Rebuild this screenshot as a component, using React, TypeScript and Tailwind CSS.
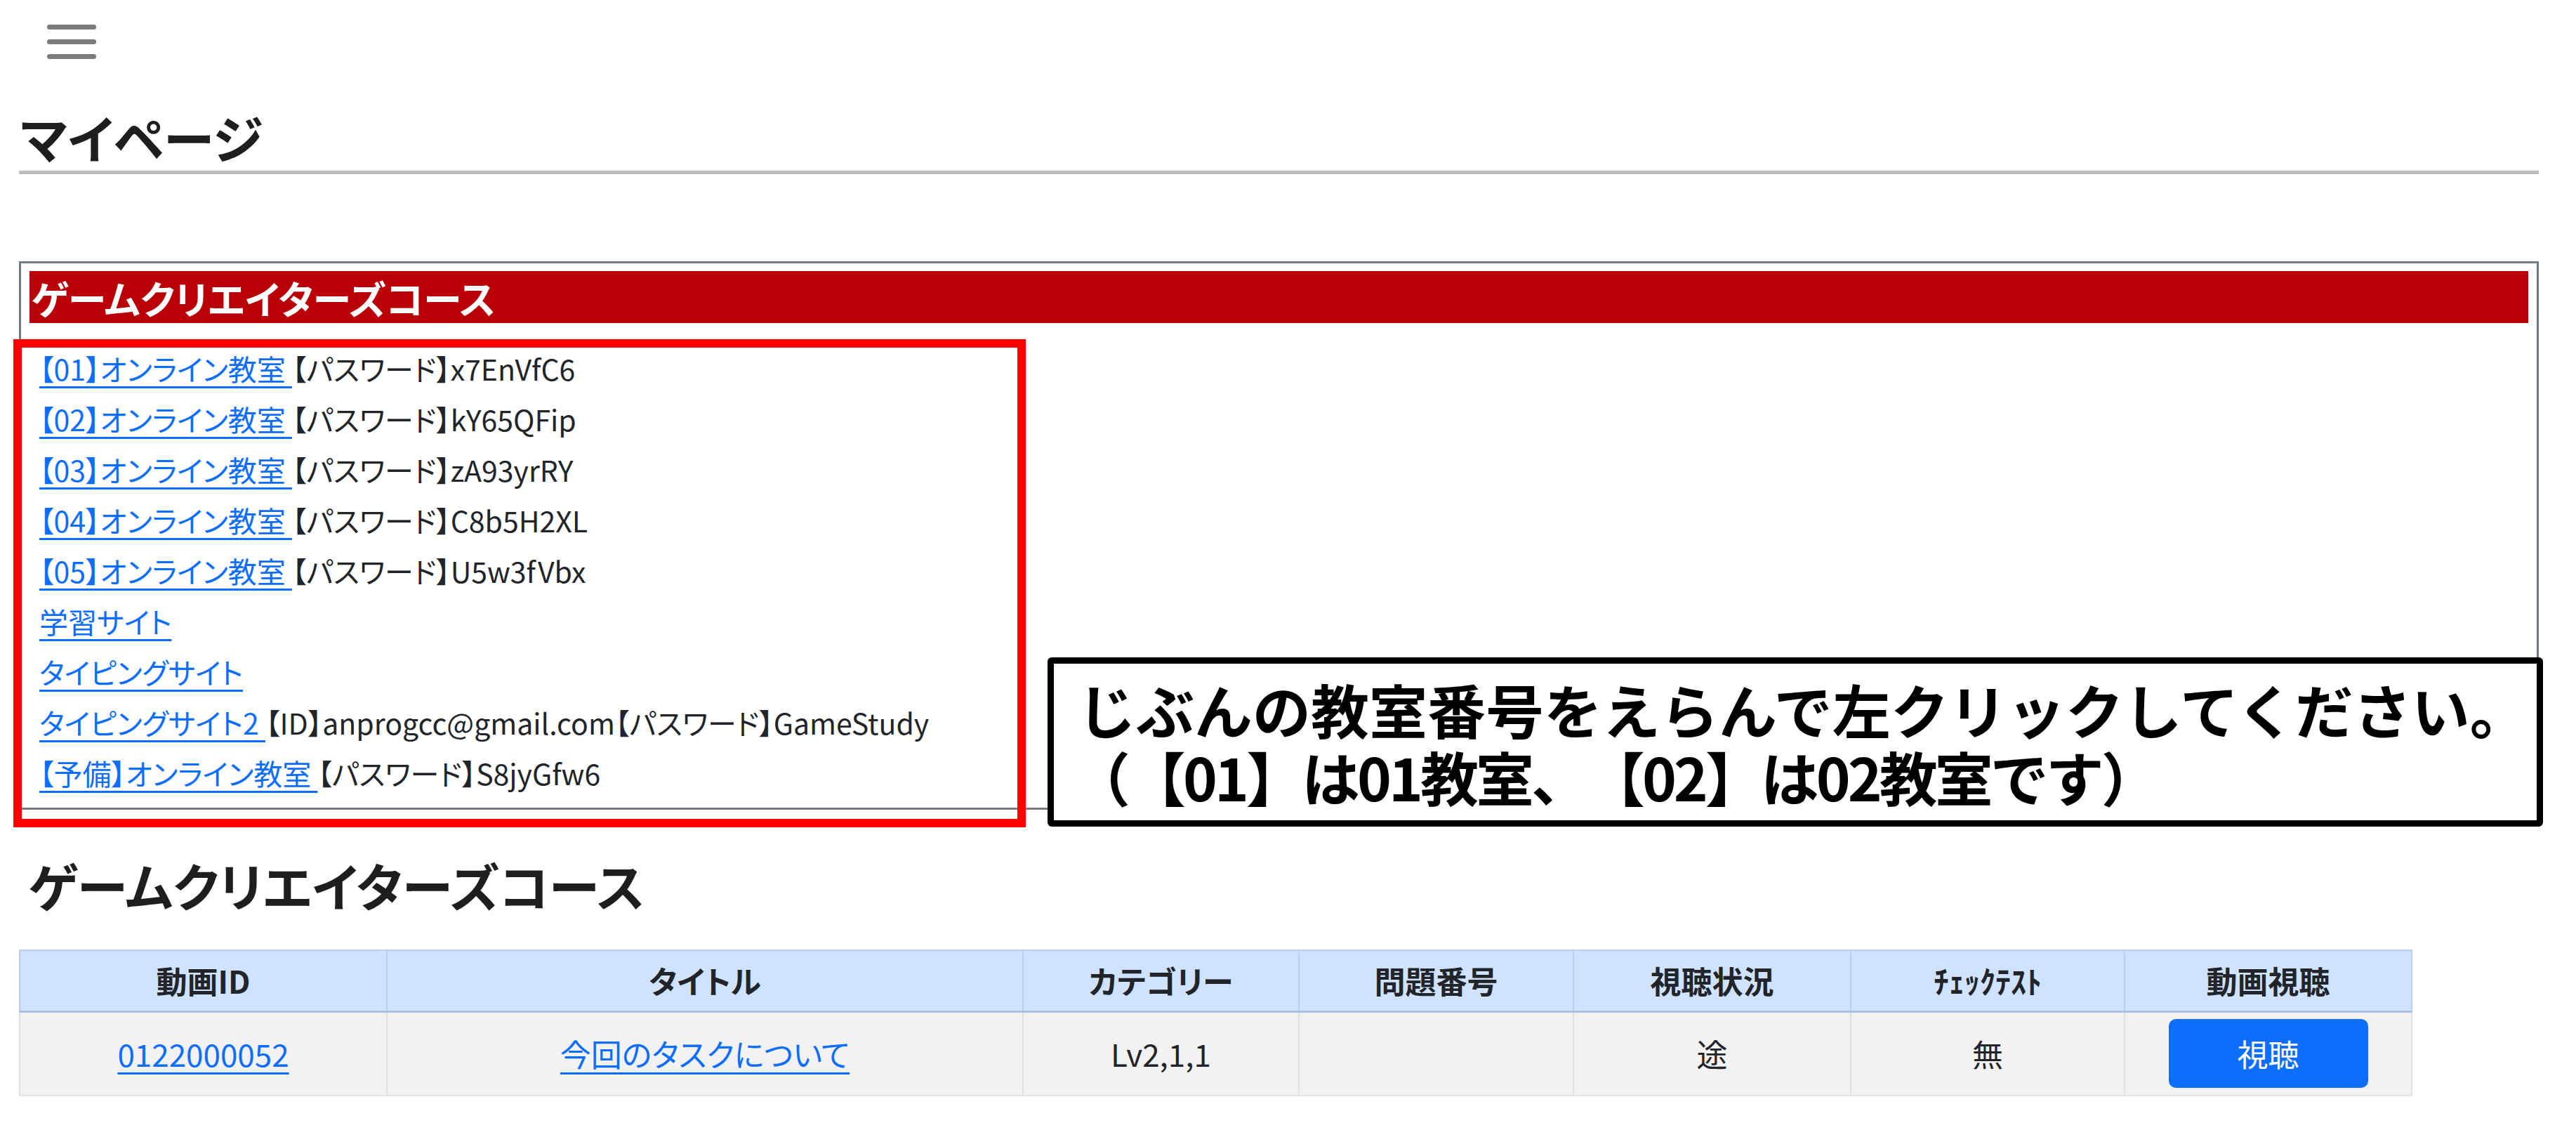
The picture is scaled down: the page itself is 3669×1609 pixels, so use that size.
import React from "react";

const rows: { link: string; rest: string }[] = [
  { link: "【01】オンライン教室 ", rest: "【パスワード】x7EnVfC6" },
  { link: "【02】オンライン教室 ", rest: "【パスワード】kY65QFip" },
  { link: "【03】オンライン教室 ", rest: "【パスワード】zA93yrRY" },
  { link: "【04】オンライン教室 ", rest: "【パスワード】C8b5H2XL" },
  { link: "【05】オンライン教室 ", rest: "【パスワード】U5w3fVbx" },
  { link: "学習サイト", rest: "" },
  { link: "タイピングサイト", rest: "" },
  { link: "タイピングサイト2 ", rest: "【ID】anprogcc@gmail.com【パスワード】GameStudy" },
  { link: "【予備】オンライン教室 ", rest: "【パスワード】S8jyGfw6" },
];

export default function App() {
  return (
    <div className="relative min-h-[1609px] w-full bg-white font-['Noto_Sans_CJK_JP','Noto_Sans',sans-serif] text-[#212529]">
      {/* hamburger */}
      <div className="pl-[67px] pt-[35px]">
        <div className="flex w-[70px] flex-col gap-[14px]">
          <span className="block h-[7px] w-[70px] rounded-full bg-[#7b7b7b]" />
          <span className="block h-[7px] w-[70px] rounded-full bg-[#7b7b7b]" />
          <span className="block h-[7px] w-[70px] rounded-full bg-[#7b7b7b]" />
        </div>
      </div>

      <div className="pl-[27px] pr-[53px]">
        <h1 className="mt-[74px] border-b-[5px] border-[#bdbdbd] pb-[12px] pl-[2px] text-[73px] font-bold leading-none text-[#1e1e1e] [font-feature-settings:'palt']">
          マイページ
        </h1>

        {/* course panel */}
        <section className="mt-[124px] border-[3px] border-[#737a82] px-[12px] pb-[14px] pt-[11px]">
          <div className="flex h-[74px] items-center bg-[#b80006] pl-[3px] text-[55px] font-bold leading-none text-white [font-feature-settings:'palt']">
            ゲームクリエイターズコース
          </div>
          <div className="mt-[28px] pl-[14px] text-[41px] [font-feature-settings:'palt']">
            {rows.map((r, i) => (
              <div key={i} className="h-[72px] w-fit whitespace-pre leading-[72px]">
                <a href="#" className="text-[#0d6efd] underline decoration-[3px] underline-offset-[8px]">
                  {r.link}
                </a>
                {r.rest}
              </div>
            ))}
          </div>
        </section>

        <h2 className="mt-[70px] w-fit pl-[14px] text-[73px] font-bold leading-none text-[#1e1e1e] [font-feature-settings:'palt']">
          ゲームクリエイターズコース
        </h2>

        <table className="mt-[56px] w-[3407px] table-fixed border-collapse text-center text-[44px] [font-feature-settings:'palt']">
          <colgroup>
            <col className="w-[523px]" />
            <col className="w-[906px]" />
            <col className="w-[393px]" />
            <col className="w-[391px]" />
            <col className="w-[395px]" />
            <col className="w-[390px]" />
            <col className="w-[409px]" />
          </colgroup>
          <thead>
            <tr className="h-[87px] bg-[#cfe2ff]">
              {["動画ID", "タイトル", "カテゴリー", "問題番号", "視聴状況", "ﾁｪｯｸﾃｽﾄ", "動画視聴"].map((h) => (
                <th
                  key={h}
                  className="border-2 border-b-[3px] border-[#bccde8] border-b-[#a9bfe3] font-bold leading-none"
                >
                  {h}
                </th>
              ))}
            </tr>
          </thead>
          <tbody>
            <tr className="h-[120px] bg-[#f2f2f2]">
              <td className="border-2 border-[#dee2e6]">
                <a href="#" className="text-[#0d6efd] underline decoration-[3px] underline-offset-[8px]">
                  0122000052
                </a>
              </td>
              <td className="border-2 border-[#dee2e6]">
                <a href="#" className="text-[#0d6efd] underline decoration-[3px] underline-offset-[8px]">
                  今回のタスクについて
                </a>
              </td>
              <td className="border-2 border-[#dee2e6]">Lv2,1,1</td>
              <td className="border-2 border-[#dee2e6]"></td>
              <td className="border-2 border-[#dee2e6]">途</td>
              <td className="border-2 border-[#dee2e6]">無</td>
              <td className="border-2 border-[#dee2e6]">
                <button className="mx-auto flex h-[98px] w-[284px] items-center justify-center rounded-[10px] bg-[#0d6efd] text-[44px] text-white">
                  視聴
                </button>
              </td>
            </tr>
          </tbody>
        </table>
      </div>

      {/* red annotation frame */}
      <div className="pointer-events-none absolute left-[19px] top-[483px] h-[695px] w-[1442px] border-[12px] border-[#ff0000]" />

      {/* callout */}
      <div className="absolute left-[1492px] top-[936px] flex h-[241px] w-[2130px] flex-col justify-center rounded-[6px] border-[9px] border-black bg-white pl-[34px] text-[83px] font-bold leading-[96px] text-black [text-spacing-trim:space-all]">
        <p>じぶんの教室番号をえらんで左クリックしてください。</p>
        <p className="-ml-[8px] tracking-[-4px]">（【01】は01教室、【02】は02教室です）</p>
      </div>
    </div>
  );
}
